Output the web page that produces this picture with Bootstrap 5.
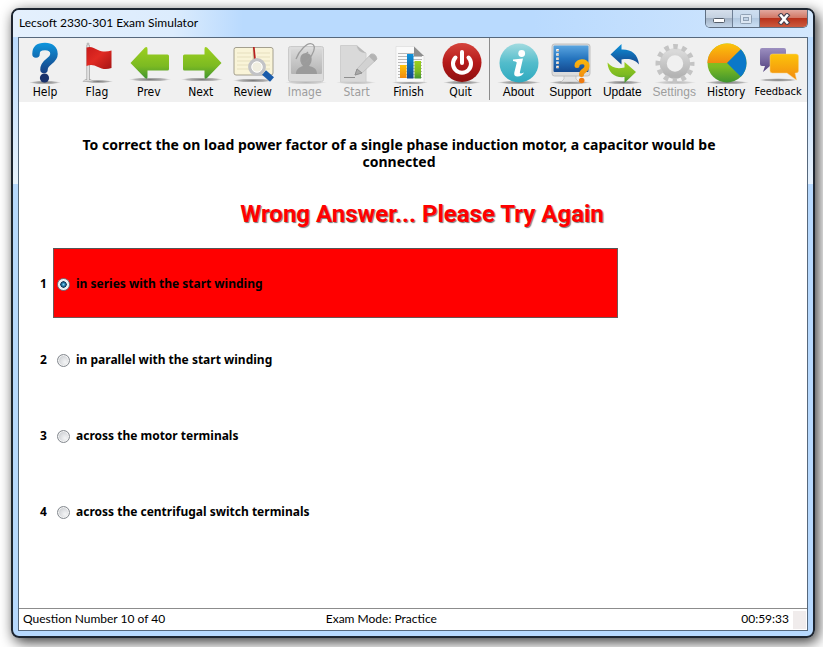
<!DOCTYPE html>
<html lang="en">
<head>
<meta charset="utf-8">
<meta name="viewport" content="width=device-width, initial-scale=1">
<title>Lecsoft 2330-301 Exam Simulator</title>
<link href="https://cdn.jsdelivr.net/npm/bootstrap@5.3.0/dist/css/bootstrap.min.css" rel="stylesheet">
<style>
body{font-family:"Noto Sans","Open Sans",sans-serif;font-size:12px;line-height:16px;color:#000;background:#fff;padding:8px 8px 9px 11px}
.app-window{border:2px solid #1d2530;border-radius:8px;padding:0 5px 5px;box-shadow:3px 4px 14px rgba(0,0,0,.8);
  background:linear-gradient(#b9dafc 0,#bcdcff 30px,#e8f3fe 174px,#b7d9fe 174px,#b7d9fe 100%)}
.app-title{height:27px;background:linear-gradient(90deg,#e4f0fd 0,#dcecfd 160px,#b9dafe 230px,#b9dafe 65%,#d3e7fd 100%);margin:0 -5px;padding:0 5px 0 6px;border-radius:6px 6px 0 0}
.app-title h1{font-family:Lato,sans-serif;font-size:12px;line-height:26px}
.cap-group{border:1px solid #5f6f82;border-top:0;border-radius:0 0 5px 5px;height:18px;overflow:hidden}
.cap-btn{border:0;padding:0;width:27px;background:linear-gradient(#d5dfeb 0,#c3d0df 48%,#a3b3c6 50%,#c3d5e8 100%);border-right:1px solid #6f8095}
.cap-btn.faded{background:linear-gradient(#cfdff0 0,#c4d7eb 48%,#b3c9e0 50%,#cbdff3 100%)}
.cap-btn.closer{width:47px;border-right:0;background:linear-gradient(#e2a99f 0,#d27765 46%,#b9331c 50%,#cc5a3e 100%)}
.cap-btn svg{display:block;margin:0 auto}
.client{border:1px solid #56687c;background:#fff}
.tools{background:#f0f0f0;height:64px;padding:0 3px 2px 0}
.tool{flex:1 1 0;min-width:0;border:0;background:none;padding:0;color:#000;font-family:"DejaVu Sans Condensed","DejaVu Sans",sans-serif;font-size:12px;line-height:14px;white-space:nowrap}
.tool.alt-face{font-family:"Liberation Sans",Arial,sans-serif}
.tool.tight{font-size:11px}
.tool svg{display:block;width:52px;height:46px;margin:0 auto}
.tool:disabled{color:#9d9d9d}
.tool-rule{width:1px;background:#8c8c8c;margin:0 2px 0 3px}
.question{font-size:14px;line-height:17px;font-weight:700;padding:34px 80px 0 52px;margin:0}
.verdict{font-family:Roboto,sans-serif;font-size:24px;line-height:30px;font-weight:700;color:#f00;text-shadow:1px 1px 1px #777;margin:29px 0 19px;padding-left:18px}
.answers{padding-left:17px;padding-right:24%;gap:6px;border:0;margin:0;min-width:0}
.answer{font-weight:700;height:70px}
.answer .num{width:17px;padding:2px 0 0 4px}
.answer-box{border:1px solid transparent;padding:2px 0 0 3px;gap:6px}
.answer-box:has(input:checked){background:#f00;border-color:#705858;border-top-color:#555}
.answer input{appearance:none;width:13px;height:13px;border-radius:50%;margin:0;border:1px solid #858a90;background:radial-gradient(circle at 65% 65%,#f4f5f6 0,#dadcdf 50%,#b5b9bf 100%);box-shadow:inset 0 0 0 1px #f4f4f4}
.answer input:checked{border-color:#6b7884;background:radial-gradient(circle,#7cd4f7 0,#2477a5 22%,#0c3252 38%,#e4eaee 44%,#f6f6f6 100%)}
.status{font-family:Lato,sans-serif;border-top:1px solid #8c8c8c;height:22px;line-height:20px;padding-left:4px}
.status-main{width:calc(39% - 3px)}
.status-grip{width:13px;height:18px;background:#f0ecec;margin:2px 1px 0 4px}
</style>
</head>
<body class="min-vh-100 d-flex flex-column">
<svg width="0" height="0" class="position-absolute" aria-hidden="true">
  <defs>
    <radialGradient id="sh"><stop offset="0" stop-color="#555" stop-opacity=".75"/><stop offset=".7" stop-color="#777" stop-opacity=".5"/><stop offset="1" stop-color="#999" stop-opacity="0"/></radialGradient>
    <linearGradient id="blue" x2="0" y2="1"><stop stop-color="#0d93dc"/><stop offset="1" stop-color="#15468c"/></linearGradient>
    <linearGradient id="screen" x2="0" y2="1"><stop stop-color="#5aa5e0"/><stop offset=".5" stop-color="#2574be"/><stop offset="1" stop-color="#154a90"/></linearGradient>
    <linearGradient id="blueU" gradientUnits="userSpaceOnUse" x1="0" y1="4" x2="0" y2="34"><stop stop-color="#0d95dd"/><stop offset="1" stop-color="#173f83"/></linearGradient>
    <linearGradient id="green" x2="0" y2="1"><stop stop-color="#9ccf1f"/><stop offset=".6" stop-color="#7cba22"/><stop offset="1" stop-color="#3f9430"/></linearGradient>
    <linearGradient id="red" x2="1" y2="1"><stop stop-color="#c81a1a"/><stop offset=".45" stop-color="#e02a22"/><stop offset="1" stop-color="#a51414"/></linearGradient>
    <linearGradient id="orange" x2="0" y2="1"><stop stop-color="#fcc40a"/><stop offset="1" stop-color="#f28a10"/></linearGradient>
    <linearGradient id="orangeU" gradientUnits="userSpaceOnUse" x1="0" y1="20" x2="0" y2="44"><stop stop-color="#fbb90c"/><stop offset="1" stop-color="#f08010"/></linearGradient>
    <linearGradient id="quit" x2="0" y2="1"><stop stop-color="#d5443c"/><stop offset=".5" stop-color="#b51a1a"/><stop offset="1" stop-color="#8e1010"/></linearGradient>
    <linearGradient id="teal" x2="0" y2="1"><stop stop-color="#a2dbe0"/><stop offset=".5" stop-color="#52bccb"/><stop offset="1" stop-color="#2ea9bf"/></linearGradient>
    <linearGradient id="purple" x2="0" y2="1"><stop stop-color="#9c8fc0"/><stop offset="1" stop-color="#51407f"/></linearGradient>
    <linearGradient id="grey" x2="0" y2="1"><stop stop-color="#d9d9d9"/><stop offset="1" stop-color="#b4b4b4"/></linearGradient>
    <linearGradient id="pole"><stop stop-color="#999"/><stop offset=".5" stop-color="#fff"/><stop offset="1" stop-color="#888"/></linearGradient>
  </defs>
</svg>
<main class="app-window d-flex flex-column flex-fill">
  <header class="app-title d-flex justify-content-between">
    <h1 class="m-0 fw-normal">Lecsoft 2330-301 Exam Simulator</h1>
    <div class="cap-group d-flex">
      <button class="cap-btn" type="button" aria-label="Minimize"><svg width="14" height="10" viewBox="0 0 14 10"><rect x="1.500" y="4.500" width="11" height="4" rx="1" fill="#fff" stroke="#555e6a"/></svg></button>
      <button class="cap-btn faded" type="button" aria-label="Maximize" disabled><svg width="14" height="12" viewBox="0 0 14 12"><rect x="1.500" y="1.500" width="11" height="9" rx="1" fill="#dce7f3" stroke="#91a2b5"/><rect x="4.500" y="4.500" width="5" height="3" fill="#c1d3e6" stroke="#91a2b5"/></svg></button>
      <button class="cap-btn closer" type="button" aria-label="Close"><svg width="14" height="12" viewBox="0 0 14 12"><path d="M4 2.500l6 7M10 2.500l-6 7" stroke="#4b4350" stroke-width="4.800" stroke-linecap="square"/><path d="M4 2.500l6 7M10 2.500l-6 7" stroke="#fff" stroke-width="2.600" stroke-linecap="square"/></svg></button>
    </div>
  </header>
  <div class="client d-flex flex-column flex-fill">
    <nav class="tools d-flex" aria-label="Exam tools">
      <button class="tool" type="button"><svg viewBox="0 0 52 46"><ellipse cx="26" cy="43.500" rx="16" ry="1.800" fill="url(#sh)"/><path d="M17 15C17 9.500 20.500 7.500 26 7.500S35 10 35 15C35 22.500 25 22 25 30.500" fill="none" stroke="url(#blueU)" stroke-width="7.500" stroke-linecap="round"/><circle cx="25.500" cy="39" r="4.600" fill="#18316c"/></svg>Help</button>
      <button class="tool" type="button"><svg viewBox="0 0 52 46"><ellipse cx="27" cy="42.500" rx="15" ry="1.600" fill="url(#sh)"/><path d="M12 42.500l2-2h6l2 2z" fill="#d8d8d8" stroke="#aaa" stroke-width=".6"/><rect x="15.500" y="6" width="3.200" height="35" fill="url(#pole)"/><circle cx="17" cy="5" r="1.500" fill="#bbb"/><path d="M15.500 8.500C20 7 23 9 27 11S36 13 40.500 11.500V29C35 31 31 30 27 28S20 25 15.500 27Z" fill="url(#red)"/></svg>Flag</button>
      <button class="tool" type="button"><svg viewBox="0 0 52 46"><ellipse cx="27" cy="40.500" rx="21" ry="2" fill="url(#sh)"/><path d="M7.500 24L22 8.500Q24.500 7 24.500 10V15.500H44.500Q46 15.500 46 17V30Q46 31.500 44.500 31.500H24.500V38Q24.500 41 22 39Z" fill="url(#green)"/></svg>Prev</button>
      <button class="tool" type="button"><svg viewBox="0 0 52 46"><ellipse cx="27" cy="40.500" rx="21" ry="2" fill="url(#sh)"/><path d="M46.500 24L32 8.500Q29.500 7 29.500 10V15.500H9.500Q8 15.500 8 17V30Q8 31.500 9.500 31.500H29.500V38Q29.500 41 32 39Z" fill="url(#green)"/></svg>Next</button>
      <button class="tool" type="button"><svg viewBox="0 0 52 46"><ellipse cx="26" cy="41.500" rx="20" ry="2" fill="url(#sh)"/><rect x="7" y="8.500" width="39" height="27.500" rx="2" fill="#f9f4d8" stroke="#8f8a78" stroke-width=".8"/><path d="M10 14h14M10 18h14M10 22h14M10 26h14M10 30h14M30 14h13M30 18h13M30 22h13M30 26h13M30 30h13" stroke="#e6dfbe" stroke-width="1"/><path d="M26.500 9v27" stroke="#cdc29c" stroke-width="1.500"/><path d="M26.800 8L28 20" stroke="#b91f1f" stroke-width="1.700"/><path d="M37 33.500l8 7" stroke="#1a5cab" stroke-width="6"/><circle cx="30" cy="28" r="7.200" fill="#f0eee0" stroke="#c2c3c6" stroke-width="3.400"/><circle cx="30" cy="28" r="5.200" fill="none" stroke="#fff" stroke-width="1"/></svg>Review</button>
      <button class="tool" type="button" disabled><svg viewBox="0 0 52 46"><ellipse cx="27" cy="43.500" rx="21" ry="1.800" fill="url(#sh)" opacity=".5"/><rect x="9.500" y="7.500" width="35" height="35" rx="2" fill="#dcdcdc" stroke="#cacaca"/><rect x="12" y="10" width="31" height="25" rx="1" fill="url(#grey)"/><path d="M17 35C17 30 20 28.500 24 27C20 23 20 14 27 14S34 23 30 27C35 28.500 38 29.500 38 35Z" fill="#9b9b9b"/><path d="M17 20C20 12 28 3 33 5S34 16 29 21S21 25 23 19L29 13" fill="none" stroke="#9d9d9d" stroke-width="1.300"/></svg>Image</button>
      <button class="tool" type="button" disabled><svg viewBox="0 0 52 46"><ellipse cx="25" cy="43.500" rx="20" ry="1.800" fill="url(#sh)" opacity=".5"/><path d="M9.500 6.500H26Q26 13 35 14V43H9.500Z" fill="#d9d9d9" stroke="#cecece"/><path d="M26 6.500Q26 13 35 14Z" fill="#b8b8b8"/><path d="M24 36l2-6L40 15q5-1 6 5L31 34Z" fill="#d2d2d2" stroke="#bbb" stroke-width=".8"/><path d="M38 17.500l5.500 5.500 2.500-3q-1-5-6-5Z" fill="#b4b4b4"/><path d="M24 36l2-6 5 4ZM13 38.500h11" fill="#aaa" stroke="#8f8f8f" stroke-width="1"/></svg>Start</button>
      <button class="tool" type="button"><svg viewBox="0 0 52 46"><ellipse cx="27" cy="43.500" rx="18" ry="1.800" fill="url(#sh)"/><path d="M13 7.500H31L41 17V43H13Z" fill="#fafafa" stroke="#ddd" stroke-width=".7"/><path d="M15 14.500h17M15 17.500h24M15 20.500h24M15 23.500h24M15 26.500h24M15 29.500h24M15 32.500h24M15 35.500h24M15 38.500h24" stroke="#a9a9a9" stroke-width=".8"/><path d="M31 7.500V17H41Z" fill="#8d8d8d"/><rect x="17" y="26" width="6.500" height="13" fill="url(#orange)"/><rect x="24" y="15" width="6.500" height="24.500" fill="url(#blue)"/><rect x="31.500" y="22" width="6.500" height="17.500" fill="url(#green)"/></svg>Finish</button>
      <button class="tool" type="button"><svg viewBox="0 0 52 46"><ellipse cx="27" cy="43.500" rx="19" ry="1.800" fill="url(#sh)"/><circle cx="27" cy="23.500" r="19.500" fill="url(#quit)"/><path d="M20.500 18.500A9 9 0 1 0 33.500 18.500" fill="none" stroke="#fff" stroke-width="4" stroke-linecap="round"/><path d="M27 13v11" stroke="#fff" stroke-width="4" stroke-linecap="round"/></svg>Quit</button>
      <div class="tool-rule"></div>
      <button class="tool alt-face" type="button"><svg viewBox="0 0 52 46"><ellipse cx="27" cy="43.500" rx="22" ry="1.800" fill="url(#sh)"/><circle cx="27" cy="24" r="19.500" fill="url(#teal)"/><circle cx="29.700" cy="14.500" r="3.400" fill="#fff"/><path d="M21 20.500Q26 20 31 19.500L27.800 33.500Q28 35.500 32 33.500Q30 37.500 25.500 37.500Q21.500 37.500 22.300 33.500L24.800 23.500Q24 22 21 22Z" fill="#fff"/></svg>About</button>
      <button class="tool alt-face" type="button"><svg viewBox="0 0 52 46"><ellipse cx="26" cy="43.500" rx="21" ry="1.800" fill="url(#sh)"/><path d="M20 36h12v4l3 3H17l3-3Z" fill="#e4e4e4" stroke="#bbb" stroke-width=".7"/><rect x="8" y="5" width="38" height="32" rx="2.500" fill="#dcdcdc" stroke="#b5b5b5" stroke-width=".8"/><rect x="9.500" y="6.500" width="35" height="26.500" rx="1" fill="url(#screen)"/><path d="M13.500 10v20" stroke="#fff" stroke-width="2.500" stroke-dasharray="2.500 1.700"/><path d="M14 11v18" stroke="#dd8a36" stroke-width="1" stroke-dasharray="1.200 3"/><path d="M33 26.500C33 22 42.500 21 43 26.500S37.500 31 37.500 35.500" fill="none" stroke="url(#orangeU)" stroke-width="5" stroke-linecap="round"/><circle cx="37.700" cy="41.500" r="2.800" fill="#ef7c12"/></svg>Support</button>
      <button class="tool alt-face" type="button"><svg viewBox="0 0 52 46"><ellipse cx="27" cy="43.500" rx="19" ry="1.800" fill="url(#sh)"/><path d="M14.500 15.500L25.500 5V10.500C35 10 42 15 43 25.500C38 20 33 19.500 25.500 20.500V25.500Z" fill="url(#blue)"/><path d="M11.500 23.500C16 29 21 30 28.500 28.500V23L40 33L28.500 44V38C19 39 12 34 11.500 23.500Z" fill="url(#green)"/></svg>Update</button>
      <button class="tool alt-face" type="button" disabled><svg viewBox="0 0 52 46"><ellipse cx="27" cy="43.500" rx="21" ry="1.800" fill="url(#sh)" opacity=".5"/><circle cx="27" cy="24.500" r="11.700" fill="none" stroke="url(#grey)" stroke-width="7"/><circle cx="27" cy="24.500" r="17" fill="none" stroke="#c4c4c4" stroke-width="5" stroke-dasharray="4.600 4.300" stroke-dashoffset="2.300"/></svg>Settings</button>
      <button class="tool" type="button"><svg viewBox="0 0 52 46"><ellipse cx="27" cy="43.500" rx="22" ry="1.800" fill="url(#sh)"/><circle cx="27" cy="24" r="19.500" fill="url(#green)"/><path d="M27 24H7.500A19.500 19.500 0 0 1 40.800 10.200Z" fill="url(#orange)"/><path d="M27 24L40.800 10.200A19.500 19.500 0 0 1 40.800 37.800Z" fill="#0a78c8"/></svg>History</button>
      <button class="tool tight" type="button"><svg viewBox="0 0 52 46"><ellipse cx="26" cy="41" rx="19" ry="1.800" fill="url(#sh)"/><path d="M10 9H32Q34 9 34 11V25Q34 27 32 27H18L11 33L13 27H10Q8 27 8 25V11Q8 9 10 9Z" fill="url(#purple)"/><path d="M20.500 15H44Q46.500 15 46.500 17.500V31.500Q46.500 34 44 34H43L44.500 41L35 34H20.500Q18 34 18 31.500V17.500Q18 15 20.500 15Z" fill="url(#orange)" stroke="#f8d27c" stroke-width=".5"/></svg>Feedback</button>
    </nav>
    <form class="d-flex flex-column flex-fill m-0">
      <p class="question text-center">To correct the on load power factor of a single phase induction motor, a capacitor would be connected</p>
      <p class="verdict text-center" role="status">Wrong Answer... Please Try Again</p>
      <fieldset class="answers d-flex flex-column" aria-label="Answers">
        <div class="answer d-flex"><span class="num align-self-center">1</span><div class="answer-box d-flex align-items-center flex-fill"><input type="radio" name="answer" id="a1" checked><label for="a1">in series with the start winding</label></div></div>
        <div class="answer d-flex"><span class="num align-self-center">2</span><div class="answer-box d-flex align-items-center flex-fill"><input type="radio" name="answer" id="a2"><label for="a2">in parallel with the start winding</label></div></div>
        <div class="answer d-flex"><span class="num align-self-center">3</span><div class="answer-box d-flex align-items-center flex-fill"><input type="radio" name="answer" id="a3"><label for="a3">across the motor terminals</label></div></div>
        <div class="answer d-flex"><span class="num align-self-center">4</span><div class="answer-box d-flex align-items-center flex-fill"><input type="radio" name="answer" id="a4"><label for="a4">across the centrifugal switch terminals</label></div></div>
      </fieldset>
    </form>
    <footer class="status d-flex">
      <span class="status-main">Question Number 10 of 40</span>
      <span>Exam Mode: Practice</span>
      <span class="ms-auto">00:59:33</span>
      <div class="status-grip"></div>
    </footer>
  </div>
</main>
<script src="https://cdn.jsdelivr.net/npm/bootstrap@5.3.0/dist/js/bootstrap.bundle.min.js"></script>
</body>
</html>
